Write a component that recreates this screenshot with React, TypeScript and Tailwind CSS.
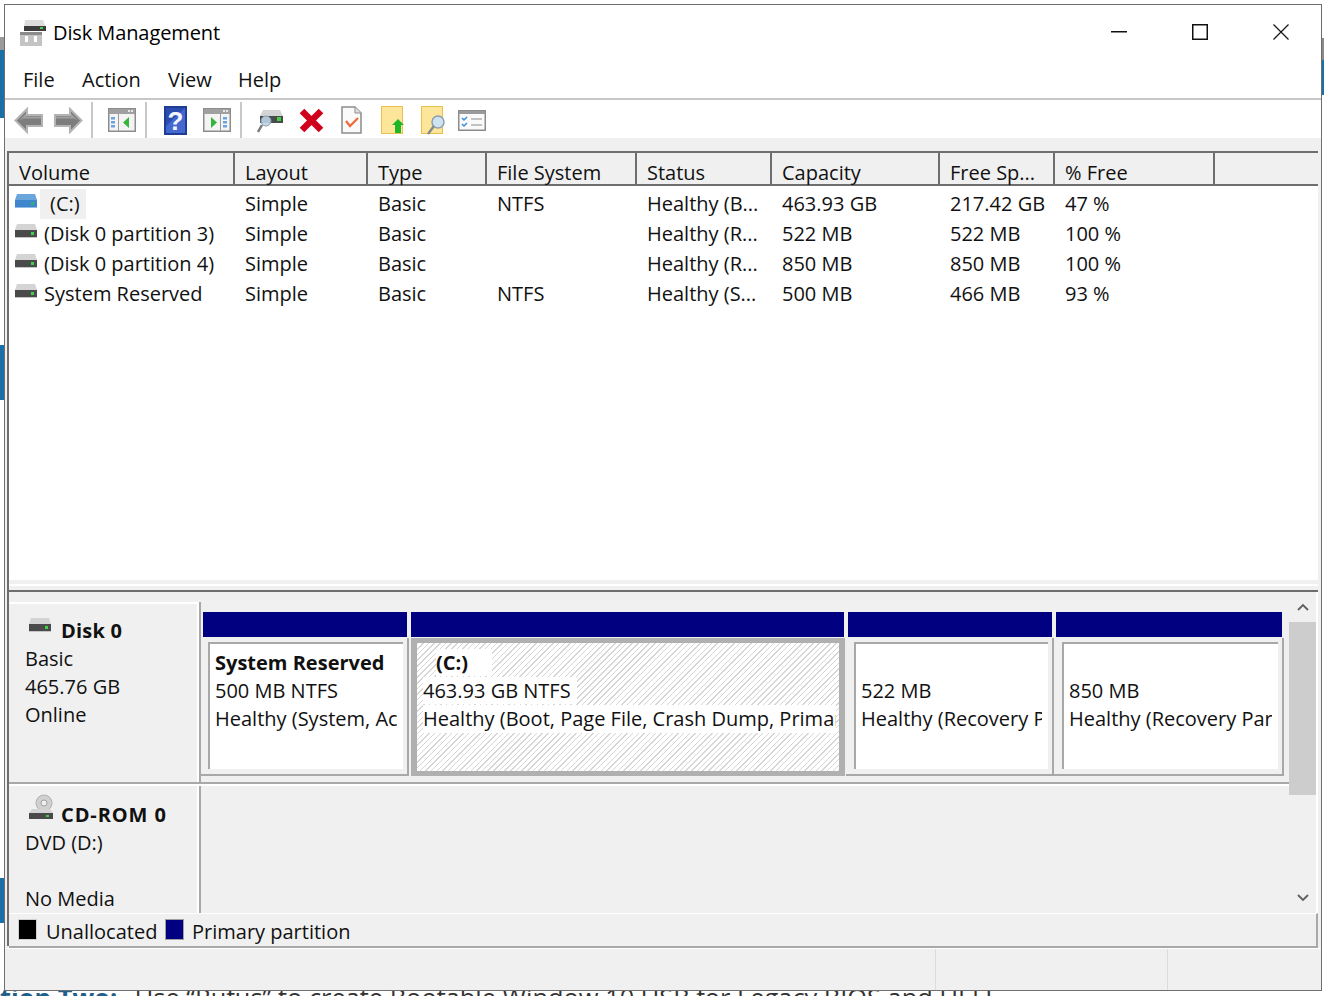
const COLUMNS = [
  { label: "Volume", width: 224 },
  { label: "Layout", width: 133 },
  { label: "Type", width: 119 },
  { label: "File System", width: 150 },
  { label: "Status", width: 135 },
  { label: "Capacity", width: 168 },
  { label: "Free Sp...", width: 115 },
  { label: "% Free", width: 160 },
];

const ROWS = [
  ["(C:)", "Simple", "Basic", "NTFS", "Healthy (B...", "463.93 GB", "217.42 GB", "47 %"],
  ["(Disk 0 partition 3)", "Simple", "Basic", "", "Healthy (R...", "522 MB", "522 MB", "100 %"],
  ["(Disk 0 partition 4)", "Simple", "Basic", "", "Healthy (R...", "850 MB", "850 MB", "100 %"],
  ["System Reserved", "Simple", "Basic", "NTFS", "Healthy (S...", "500 MB", "466 MB", "93 %"],
];

function DriveIcon({ blue = false }: { blue?: boolean }) {
  return (
    <svg width="24" height="16" viewBox="0 0 24 16" className="shrink-0">
      <path d="M3 1h18l2 6H1z" fill={blue ? "#6aa6dc" : "#d4d4d4"} />
      <rect x="1" y="7" width="22" height="7" fill={blue ? "#3f86cc" : "#4a4a4a"} />
      <rect x="1" y="14" width="22" height="1" fill={blue ? "#8fbde6" : "#c4c4c4"} />
      <rect x="17" y="9" width="3" height="3" fill={blue ? "#2fae70" : "#3fd04a"} />
    </svg>
  );
}

function AppIcon() {
  return (
    <svg width="28" height="28" viewBox="0 0 28 28">
      <path d="M6 1h18l3 8H5z" fill="#dcdcdc" />
      <rect x="5" y="7" width="22" height="5" fill="#3c3c3c" />
      <rect x="21" y="8" width="3" height="2" fill="#3fd04a" />
      <path d="M1 13h22v14H1z" fill="#c4c4c4" />
      <path d="M1 13h22v3H1z" fill="#8c8c8c" />
      <rect x="6" y="17" width="3" height="6" fill="#fff" />
      <rect x="15" y="17" width="3" height="6" fill="#fff" />
    </svg>
  );
}

function BackIcon({ flip = false }: { flip?: boolean }) {
  return (
    <svg width="29" height="27" viewBox="0 0 29 27" className={flip ? "-scale-x-100" : ""}>
      <path d="M1.500 13.500 13 2v6h15v11H13v6z" fill="#7d7d7d" stroke="#b4b4b4" strokeWidth="2" />
      <path d="M5 13.500 12 6.500v3h15v2H9z" fill="#a0a0a0" />
    </svg>
  );
}

function PaneIcon({ right = false }: { right?: boolean }) {
  return (
    <svg width="28" height="24" viewBox="0 0 28 24">
      <rect x="0.750" y="0.750" width="26.500" height="22.500" fill="#f4f4f4" stroke="#8c8c8c" strokeWidth="1.500" />
      <rect x="1" y="1" width="26" height="5" fill="#a0a0a0" />
      <rect x="20" y="2" width="2" height="2" fill="#e8e8e8" />
      <rect x="23" y="2" width="2" height="2" fill="#e8e8e8" />
      {right ? (
        <>
          <rect x="17" y="6" width="1" height="17" fill="#9a9a9a" />
          <path d="M8 9l6 5.500-6 5.500z" fill="#35b53a" />
          <rect x="20" y="9" width="4" height="2.500" fill="#6aa6dc" />
          <rect x="20" y="13" width="4" height="2.500" fill="#6aa6dc" />
          <rect x="20" y="17" width="4" height="2.500" fill="#6aa6dc" />
        </>
      ) : (
        <>
          <rect x="10" y="6" width="1" height="17" fill="#9a9a9a" />
          <path d="M21 9l-6 5.500 6 5.500z" fill="#35b53a" />
          <rect x="3" y="9" width="4" height="2.500" fill="#6aa6dc" />
          <rect x="3" y="13" width="4" height="2.500" fill="#6aa6dc" />
          <rect x="3" y="17" width="4" height="2.500" fill="#6aa6dc" />
        </>
      )}
    </svg>
  );
}

function HelpIcon() {
  return (
    <svg width="23" height="29" viewBox="0 0 23 29">
      <rect width="23" height="29" fill="#1f3d96" />
      <rect x="2" y="2" width="19" height="25" fill="#4468cf" />
      <path d="M2 2h19L2 20z" fill="#2c4db0" />
      <text x="11.500" y="24" textAnchor="middle" fontSize="26" fontWeight="700" fill="#f4f6ff" fontFamily="'Liberation Sans', sans-serif">?</text>
    </svg>
  );
}

function ConnectIcon() {
  return (
    <svg width="27" height="27" viewBox="0 0 27 27">
      <path d="M6 3h17l3 6H3z" fill="#d4d4d4" />
      <rect x="3" y="9" width="23" height="7" fill="#4a4a4a" />
      <rect x="20" y="10" width="4" height="4" fill="#3fd04a" />
      <circle cx="9" cy="14" r="5" fill="#bcd4e6" fillOpacity="0.9" stroke="#8aa0b0" />
      <path d="M5 18 1 25" stroke="#7a7a7a" strokeWidth="2.500" />
    </svg>
  );
}

function DeleteIcon() {
  return (
    <svg width="25" height="25" viewBox="0 0 25 25">
      <path d="M3 3l19 19M22 3 3 22" stroke="#d0021b" strokeWidth="6.500" />
    </svg>
  );
}

function PropsIcon() {
  return (
    <svg width="21" height="28" viewBox="0 0 21 28">
      <path d="M1 1h13l6 6v20H1z" fill="#fafafa" stroke="#8c8c8c" strokeWidth="1.500" />
      <path d="M14 1v6h6" fill="#e0e0e0" stroke="#8c8c8c" />
      <path d="M5 15l4 5 8-8" fill="none" stroke="#ee6a3a" strokeWidth="2.200" />
    </svg>
  );
}

function FolderUpIcon() {
  return (
    <svg width="23" height="28" viewBox="0 0 23 28">
      <rect x="0.500" y="0.500" width="21" height="27" fill="#fde59a" stroke="#e8c050" />
      <path d="M17 13l6 6h-3v8h-6v-8h-3z" fill="#1fb526" />
    </svg>
  );
}

function FolderFindIcon() {
  return (
    <svg width="25" height="29" viewBox="0 0 25 29">
      <rect x="0.500" y="0.500" width="21" height="27" fill="#fde59a" stroke="#e8c050" />
      <circle cx="17" cy="16" r="6" fill="#cfe3ee" stroke="#8aa0b0" strokeWidth="1.500" />
      <path d="M13 20 7 28" stroke="#8a8a8a" strokeWidth="2.500" />
    </svg>
  );
}

function ListIcon() {
  return (
    <svg width="28" height="21" viewBox="0 0 28 21">
      <rect x="0.750" y="0.750" width="26.500" height="19.500" fill="#fafafa" stroke="#8c8c8c" strokeWidth="1.500" />
      <rect x="1" y="1" width="26" height="3" fill="#9a9a9a" />
      <path d="M4 8l2 2 3-3M4 14l2 2 3-3" fill="none" stroke="#3a8ed8" strokeWidth="1.500" />
      <path d="M13 9h11M13 15h11" stroke="#b0b0b0" strokeWidth="1.500" />
    </svg>
  );
}

function ToolSep() {
  return <div className="w-[2px] h-[36px] bg-[#c8c8c8]" />;
}

function Partition({
  width,
  title,
  size,
  status,
  selected = false,
  wide = false,
}: {
  width: number;
  title?: string;
  size: string;
  status: string;
  selected?: boolean;
  wide?: boolean;
}) {
  return (
    <div className="shrink-0 flex flex-col" style={{ width }}>
      <div className="h-[25px] mx-[2px] bg-[#000080]" />
      <div className="h-[1px]" />
      {selected ? (
        <div className="h-[138px] ml-[2px] mr-[1px] bg-[#b0b0b0] py-[5px] px-[6px]">
          <div className="h-full overflow-hidden whitespace-nowrap bg-[repeating-linear-gradient(135deg,#d6d6d6_0,#d6d6d6_1px,#ffffff_1px,#ffffff_4px)] pt-[6px] pl-[6px] pr-[3px] leading-[28px]">
            <div className="font-bold pl-[13px]">
              <span className="bg-white pr-[24px]">{title}</span>
            </div>
            <div>
              <span className="bg-white pr-[6px]">{size}</span>
            </div>
            <div className="bg-white overflow-hidden">{status}</div>
          </div>
        </div>
      ) : (
        <div className={`h-[138px] bg-[#f0f0f0] border-r-2 border-b-2 border-[#a8a8a8] pt-[4px] pr-[4px] pb-[5px] ${wide ? "pl-[8px]" : "pl-[7px]"}`}>
          <div className="h-full bg-white border-t-2 border-l-2 border-[#a8a8a8] pt-[5px] pl-[5px] pr-[6px] leading-[28px]">
            <div className="overflow-hidden whitespace-nowrap">
              <div className="font-bold h-[28px]">{title}</div>
              <div>{size}</div>
              <div>{status}</div>
            </div>
          </div>
        </div>
      )}
    </div>
  );
}

export default function App() {
  return (
    <div className="relative w-[1324px] h-[996px] overflow-hidden bg-white text-[20px] text-[#111111] font-['Open_Sans',sans-serif]">
      {/* page behind the window */}
      <div className="absolute left-0 top-[37px] w-[5px] h-[13px] bg-[#9a9a9a]" />
      <div className="absolute left-0 top-[50px] w-[5px] h-[68px] bg-[#1b6fa8]" />
      <div className="absolute left-0 top-[345px] w-[5px] h-[55px] bg-[#1b6fa8]" />
      <div className="absolute left-0 top-[878px] w-[5px] h-[45px] bg-[#1b6fa8]" />
      <div className="absolute right-0 top-[38px] w-[2px] h-[22px] bg-[#8a8a8a]" />
      <div className="absolute right-0 top-[60px] w-[2px] h-[35px] bg-[#1b6fa8]" />
      <div className="absolute left-0 top-[978px] whitespace-nowrap text-[25.4px] text-[#333333]">
        <span className="font-bold text-[#1f5f8b] mr-[11px]">tion Two:</span> Use “Rufus” to create Bootable Window 10 USB for Legacy BIOS and UEFI
      </div>

      {/* window */}
      <div className="absolute left-[4px] top-[4px] w-[1318px] h-[987px] border border-[#6e6e6e] bg-[#f0f0f0] flex flex-col">
        <div className="h-[57px] bg-white flex items-center pl-[14px] shrink-0">
          <div className="-mt-[2px]"><AppIcon /></div>
          <span className="ml-[6px] -mt-[2px] text-black tracking-[-0.1px]">Disk Management</span>
          <div className="flex-1" />
          <svg width="16" height="2" viewBox="0 0 16 2" className="mr-[65px] -mt-[3px]">
            <rect width="16" height="1.500" fill="#111" />
          </svg>
          <svg width="16" height="16" viewBox="0 0 16 16" className="mr-[65px] -mt-[3px]">
            <rect x="0.750" y="0.750" width="14.500" height="14.500" fill="none" stroke="#111" strokeWidth="1.500" />
          </svg>
          <svg width="16" height="16" viewBox="0 0 16 16" className="mr-[32px] -mt-[3px]">
            <path d="M0.500 0.500l15 15M15.500 0.500l-15 15" stroke="#111" strokeWidth="1.200" />
          </svg>
        </div>
        <div className="h-[36px] bg-white flex items-center pl-[18px] shrink-0">
          <span className="w-[59px]">File</span>
          <span className="w-[86px]">Action</span>
          <span className="w-[70px]">View</span>
          <span>Help</span>
        </div>
        <div className="h-[2px] bg-[#c8c8c8] shrink-0" />
        <div className="h-[38px] bg-white flex items-center pl-[9px] pt-[2px] shrink-0">
          <BackIcon />
          <div className="ml-[11px]"><BackIcon flip /></div>
          <div className="ml-[8px]"><ToolSep /></div>
          <div className="ml-[15px]"><PaneIcon /></div>
          <div className="ml-[9px]"><ToolSep /></div>
          <div className="ml-[17px]"><HelpIcon /></div>
          <div className="ml-[16px]"><PaneIcon right /></div>
          <div className="ml-[9px]"><ToolSep /></div>
          <div className="ml-[15px]"><ConnectIcon /></div>
          <div className="ml-[15px]"><DeleteIcon /></div>
          <div className="ml-[17px]"><PropsIcon /></div>
          <div className="ml-[19px]"><FolderUpIcon /></div>
          <div className="ml-[17px]"><FolderFindIcon /></div>
          <div className="ml-[12px]"><ListIcon /></div>
        </div>
        <div className="h-[13px] shrink-0" />

        {/* volume list */}
        <div className="flex-1 min-h-0 flex flex-col ml-[2px] mr-[3px] border-l-2 border-[#6e6e6e]">
          <div className="h-[35px] shrink-0 flex border-t-2 border-b-2 border-[#6e6e6e] bg-[#f0f0f0]">
            {COLUMNS.map((c, i) => (
              <div
                key={c.label}
                className="shrink-0 pl-[10px] pt-[6px] leading-[28px] border-r-2 border-[#6e6e6e]"
                style={{ width: i === 0 ? c.width + 2 : c.width }}
              >
                {c.label}
              </div>
            ))}
          </div>
          <div className="h-[394px] shrink-0 bg-white pt-[3px]">
            {ROWS.map((row) => (
              <div key={row[0]} className="h-[30px] flex items-center">
                {row.map((cell, i) =>
                  i === 0 ? (
                    <div key={i} className="shrink-0 flex items-center pl-[5px]" style={{ width: COLUMNS[0].width }}>
                      <div className="-mt-[7px]"><DriveIcon blue={cell === "(C:)"} /></div>
                      {cell === "(C:)" ? (
                        <span className="ml-[2px] h-[30px] leading-[30px] pl-[10px] pr-[6px] bg-[#f0f0f0]">{cell}</span>
                      ) : (
                        <span className="ml-[6px] whitespace-nowrap">{cell}</span>
                      )}
                    </div>
                  ) : (
                    <div key={i} className="shrink-0 pl-[12px] whitespace-nowrap" style={{ width: COLUMNS[i].width }}>
                      {cell}
                    </div>
                  ),
                )}
              </div>
            ))}
          </div>
          <div className="h-[12px] shrink-0 bg-[#f0f0f0] border-b-2 border-[#6e6e6e]">
            <div className="h-[2px] mt-[4px] bg-white" />
          </div>

          {/* graphical view */}
          <div className="h-[321px] shrink-0 flex">
            <div className="flex-1 min-w-0 flex flex-col pt-[10px]">
              <div className="h-[182px] shrink-0 flex border-b-2 border-[#a8a8a8]">
                <div className="w-[190px] shrink-0 border-t-2 border-r-2 border-white pl-[16px] leading-[28px]">
                  <div className="flex items-center h-[41px] pt-[13px]">
                    <div className="ml-[3px] -mt-[12px]"><DriveIcon /></div>
                    <span className="ml-[9px] font-bold tracking-[0.2px]">Disk 0</span>
                  </div>
                  <div>Basic</div>
                  <div>465.76 GB</div>
                  <div>Online</div>
                </div>
                <div className="w-[2px] shrink-0 bg-[#a8a8a8]" />
                <div className="flex-1 flex pt-[10px]">
                  <Partition width={208} title="System Reserved" size="500 MB NTFS" status="Healthy (System, Active, Primary Partition)" />
                  <Partition width={437} title="(C:)" size="463.93 GB NTFS" status="Healthy (Boot, Page File, Crash Dump, Primary Partition)" selected />
                  <Partition width={208} size="522 MB" status="Healthy (Recovery Partition)" wide />
                  <Partition width={230} size="850 MB" status="Healthy (Recovery Partition)" wide />
                </div>
              </div>
              <div className="flex-1 min-h-0 flex border-t-2 border-white">
                <div className="w-[190px] shrink-0 border-r-2 border-white pl-[16px] leading-[28px]">
                  <div className="flex items-center h-[43px]">
                    <svg width="26" height="27" viewBox="0 0 26 27" className="ml-[3px] -mt-[1px] shrink-0">
                      <circle cx="16" cy="9" r="8" fill="#d0d0d0" stroke="#b0b0b0" />
                      <circle cx="16" cy="9" r="3" fill="#f0f0f0" stroke="#a0a0a0" />
                      <path d="M4 15h18l3 4H1z" fill="#d4d4d4" />
                      <rect x="1" y="19" width="24" height="6" fill="#4a4a4a" />
                      <rect x="18" y="21" width="3" height="2" fill="#3fd04a" />
                    </svg>
                    <span className="ml-[7px] font-bold mt-[14px] tracking-[0.9px] whitespace-nowrap">CD-ROM 0</span>
                  </div>
                  <div>DVD (D:)</div>
                  <div className="h-[28px]" />
                  <div>No Media</div>
                </div>
                <div className="w-[2px] shrink-0 bg-[#a8a8a8]" />
              </div>
            </div>
            {/* scrollbar */}
            <div className="w-[27px] shrink-0 flex flex-col items-center">
              <div className="h-[30px] flex items-center justify-center">
                <svg width="12" height="8" viewBox="0 0 12 8">
                  <path d="M1 7l5-5 5 5" fill="none" stroke="#606060" strokeWidth="1.800" />
                </svg>
              </div>
              <div className="w-full h-[173px] bg-[#cdcdcd]" />
              <div className="flex-1" />
              <div className="h-[30px] flex items-center justify-center">
                <svg width="12" height="8" viewBox="0 0 12 8">
                  <path d="M1 1l5 5 5-5" fill="none" stroke="#606060" strokeWidth="1.800" />
                </svg>
              </div>
            </div>
            <div className="w-[2px] shrink-0 bg-white" />
          </div>

          {/* legend */}
          <div className="h-[35px] shrink-0 bg-[#f0f0f0] border-t border-b-2 border-r-2 border-t-white border-b-[#a8a8a8] border-r-[#a8a8a8] flex items-center pl-[9px]">
            <div className="w-[19px] h-[21px] bg-black border border-[#d0d0d0] -mt-[2px]" />
            <span className="ml-[9px] w-[119px] pt-[3px] whitespace-nowrap">Unallocated</span>
            <div className="w-[19px] h-[21px] bg-[#000080] border border-[#a0a0a0] -mt-[2px]" />
            <span className="ml-[8px] pt-[3px] whitespace-nowrap">Primary partition</span>
          </div>
        </div>

        {/* status bar */}
        <div className="h-[42px] shrink-0 flex border-t border-white mt-[2px]">
          <div className="w-[931px] border-r border-[#dcdcdc]" />
          <div className="w-[232px] border-r border-[#dcdcdc]" />
        </div>
      </div>
    </div>
  );
}
